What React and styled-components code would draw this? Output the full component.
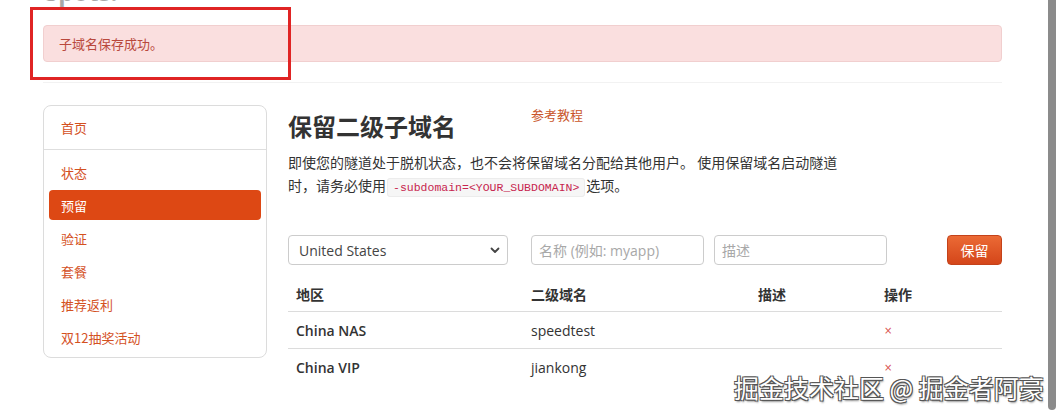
import React from "react";
import styled, { createGlobalStyle } from "styled-components";

const Global = createGlobalStyle`
  html, body { margin: 0; padding: 0; background: #fff; overflow: hidden; }
  body { font-family: "Open Sans", "Noto Sans CJK SC", sans-serif; color: #333; }
  * { box-sizing: border-box; }
`;

const Page = styled.div`
  position: relative;
  width: 1060px;
  height: 419px;
  overflow: hidden;
`;

const Container = styled.div`
  width: 959px;
  margin-left: 43px;
  padding-top: 1px;
`;

const TopTitle = styled.div`
  margin-top: -23px;
  height: 27px;
  padding-left: 2px;
  font-size: 24px;
  font-weight: 700;
  color: #a8a8a8;
  line-height: 27px;
`;

const Alert = styled.div`
  margin-top: 20px;
  height: 37px;
  display: flex;
  align-items: center;
  padding-left: 15px;
  background: #fadfdf;
  border: 1px solid #f1cfcf;
  border-radius: 4px;
  color: #b9483c;
  font-size: 13px;
  font-family: "Noto Sans CJK SC", sans-serif;
`;

const Rule = styled.div`
  margin-top: 20px;
  height: 1px;
  background: #f2f2f2;
`;

const Body = styled.div`
  display: flex;
  gap: 21px;
  margin-top: 22px;
`;

const Sidebar = styled.nav`
  width: 224px;
  height: 253px;
  flex-shrink: 0;
  border: 1px solid #dcdcdc;
  border-radius: 8px;
  padding: 0 5px;
  display: flex;
  flex-direction: column;
`;

const NavItem = styled.div`
  height: ${(p) => (p.$first ? "43px" : "30px")};
  margin-bottom: ${(p) => (p.$first ? "0" : "3px")};
  display: flex;
  align-items: center;
  padding-left: 12px;
  border-radius: 4px;
  font-size: 13px;
  font-family: "Noto Sans CJK SC", sans-serif;
  color: ${(p) => (p.$active ? "#fff" : "#d4511f")};
  background: ${(p) => (p.$active ? "#dd4814" : "transparent")};
`;

const NavDivider = styled.div`
  height: 1px;
  margin: 0 -5px 7px;
  background: #dedede;
`;

const Main = styled.main`
  flex: 1;
  display: flex;
  flex-direction: column;
`;

const HeaderRow = styled.div`
  display: flex;
  align-items: flex-start;
`;

const H1 = styled.h1`
  margin: 0;
  width: 243px;
  font-size: 24px;
  line-height: 40px;
  margin-top: 1px;
  font-weight: 700;
  color: #333;
  font-family: "Noto Sans CJK SC", sans-serif;
`;

const RefLink = styled.a`
  font-size: 13px;
  color: #c9552a;
  text-decoration: none;
  line-height: 20px;
  font-family: "Noto Sans CJK SC", sans-serif;
`;

const Lead = styled.p`
  margin: 5px 0 0;
  width: 558px;
  font-size: 14px;
  line-height: 23px;
  color: #333;
  font-family: "Noto Sans CJK SC", sans-serif;
`;

const Code = styled.code`
  font-family: "Liberation Mono", monospace;
  font-size: 11.5px;
  color: #c7254e;
  background: #f6f6f6;
  border: 1px solid #ececec;
  border-radius: 3px;
  padding: 2px 5px;
  margin: 0 1px;
`;

const Form = styled.div`
  display: flex;
  align-items: center;
  margin-top: 36px;
  height: 30px;
`;

const Select = styled.div`
  width: 220px;
  height: 30px;
  border: 1px solid #ccc;
  border-radius: 4px;
  display: flex;
  align-items: center;
  justify-content: space-between;
  padding: 0 6px 0 10px;
  font-size: 14px;
  color: #444;
  font-family: "Open Sans", sans-serif;
  margin-right: 23px;
`;

const Input = styled.div`
  width: 173px;
  height: 30px;
  border: 1px solid #ccc;
  border-radius: 4px;
  display: flex;
  align-items: center;
  padding-left: 7px;
  font-size: 14px;
  color: #a8a8a8;
  font-family: "Open Sans", "Noto Sans CJK SC", sans-serif;
  margin-right: ${(p) => p.$mr || 0}px;
`;

const Button = styled.button`
  margin-left: auto;
  width: 55px;
  height: 30px;
  border: 1px solid #c4421a;
  border-radius: 4px;
  background: linear-gradient(#eb6a35, #d4461a);
  color: #fff;
  font-size: 14px;
  font-family: "Noto Sans CJK SC", sans-serif;
  padding: 0;
`;

const Table = styled.div`
  margin-top: 12px;
  display: grid;
  grid-template-columns: 235px 227px 126px 126px;
`;

const Th = styled.div`
  height: 35px;
  padding: 0 8px;
  display: flex;
  align-items: center;
  font-weight: 700;
  font-size: 14px;
  color: #333;
  border-bottom: 1px solid #dcdcdc;
  font-family: "Noto Sans CJK SC", sans-serif;
`;

const Td = styled.div`
  height: 37px;
  padding: 0 8px;
  display: flex;
  align-items: center;
  font-size: 14px;
  color: #333;
  font-weight: ${(p) => (p.$bold ? 600 : 400)};
  border-bottom: ${(p) => (p.$last ? "none" : "1px solid #dcdcdc")};
  font-family: "Open Sans", sans-serif;
`;

const Del = styled.span`
  color: #d9534f;
  font-size: 10px;
  font-family: "DejaVu Sans", sans-serif;
`;

const Annotation = styled.div`
  position: absolute;
  left: 30px;
  top: 7px;
  width: 261px;
  height: 73px;
  border: 3px solid #e02424;
`;

const Scrollbar = styled.div`
  position: absolute;
  right: 4px;
  top: 0;
  width: 8px;
  height: 410px;
  background: #8b8b8b;
  border-radius: 0 0 4px 4px;
`;

const Watermark = styled.div`
  position: absolute;
  left: 734px;
  top: 372px;
  font-size: 25px;
  line-height: 30px;
  color: #fff;
  font-family: "Noto Sans CJK SC", sans-serif;
  text-shadow: -1px -1px 0 #555, 1px -1px 0 #555, -1px 1px 0 #555, 1px 1px 0 #555, 1px 2px 2px #888;
  white-space: nowrap;
`;

const Chevron = () => (
  <svg width="12" height="12" viewBox="0 0 12 12">
    <path d="M2.5 4.5 L6 8 L9.5 4.5" fill="none" stroke="#444" strokeWidth="1.8" strokeLinecap="round" strokeLinejoin="round" />
  </svg>
);

const navItems = ["状态", "预留", "验证", "套餐", "推荐返利", "双12抽奖活动"];

const rows = [
  { region: "China NAS", sub: "speedtest", desc: "" },
  { region: "China VIP", sub: "jiankong", desc: "" },
];

export default function App() {
  return (
    <Page>
      <Global />
      <Container>
        <TopTitle>Spots.</TopTitle>
        <Alert>子域名保存成功。</Alert>
        <Rule />
        <Body>
          <Sidebar>
            <NavItem $first>首页</NavItem>
            <NavDivider />
            {navItems.map((n) => (
              <NavItem key={n} $active={n === "预留"}>
                {n}
              </NavItem>
            ))}
          </Sidebar>
          <Main>
            <HeaderRow>
              <H1>保留二级子域名</H1>
              <RefLink href="#">参考教程</RefLink>
            </HeaderRow>
            <Lead>
              即使您的隧道处于脱机状态，也不会将保留域名分配给其他用户。 使用保留域名启动隧道时，请务必使用
              <Code>-subdomain=&lt;YOUR_SUBDOMAIN&gt;</Code>选项。
            </Lead>
            <Form>
              <Select>
                <span>United States</span>
                <Chevron />
              </Select>
              <Input $mr={10}>名称 (例如: myapp)</Input>
              <Input>描述</Input>
              <Button>保留</Button>
            </Form>
            <Table>
              <Th>地区</Th>
              <Th>二级域名</Th>
              <Th>描述</Th>
              <Th>操作</Th>
              {rows.map((r, i) => (
                <React.Fragment key={r.region}>
                  <Td $bold $last={i === rows.length - 1}>{r.region}</Td>
                  <Td $last={i === rows.length - 1}>{r.sub}</Td>
                  <Td $last={i === rows.length - 1}>{r.desc}</Td>
                  <Td $last={i === rows.length - 1}>
                    <Del>×</Del>
                  </Td>
                </React.Fragment>
              ))}
            </Table>
          </Main>
        </Body>
      </Container>
      <Annotation />
      <Watermark>掘金技术社区 @ 掘金者阿豪</Watermark>
      <Scrollbar />
    </Page>
  );
}
